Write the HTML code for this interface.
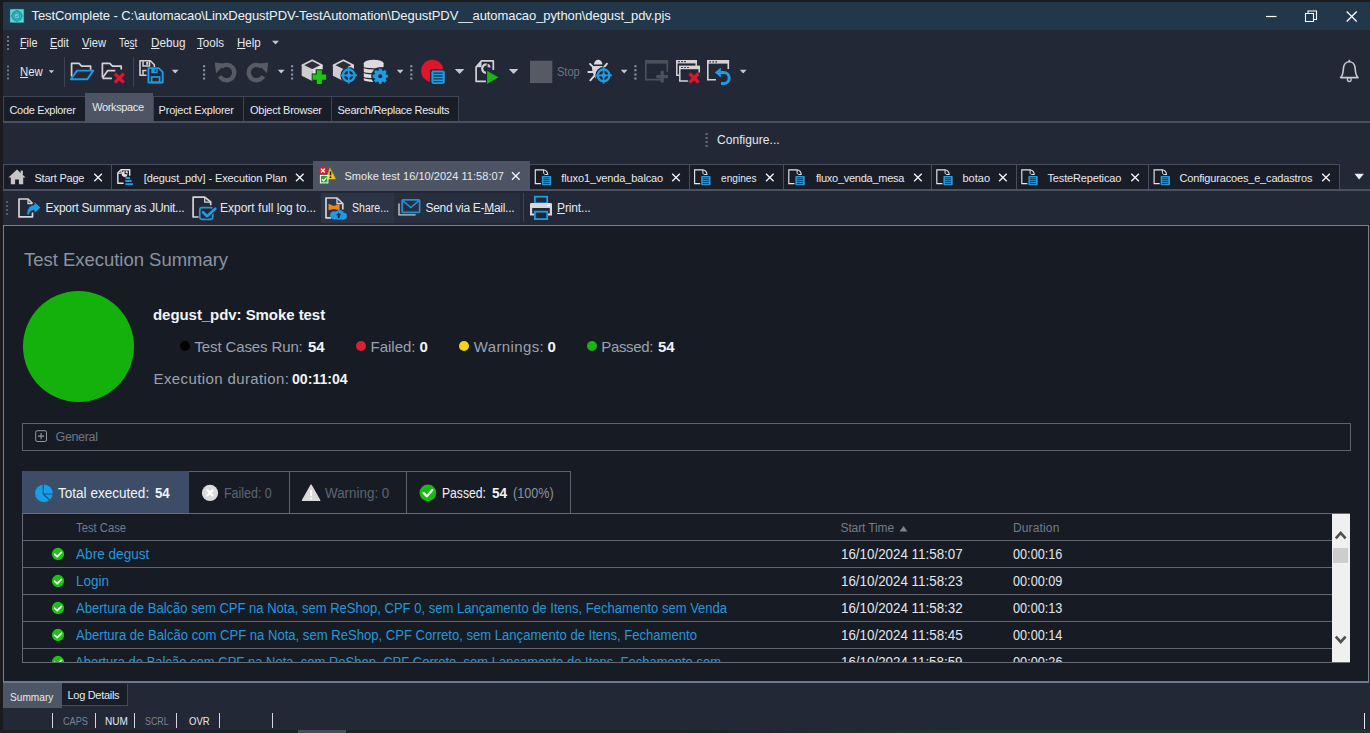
<!DOCTYPE html>
<html>
<head>
<meta charset="utf-8">
<title>TestComplete</title>
<style>
*{box-sizing:border-box;margin:0;padding:0}
html,body{width:1370px;height:733px;overflow:hidden;background:#222836;}
body{font-family:"Liberation Sans",sans-serif;color:#e6e9ee;position:relative;font-size:12px;}
.a{position:absolute;white-space:nowrap;}
.t{position:absolute;white-space:nowrap;line-height:1;}
u{text-decoration:underline;text-underline-offset:1px;text-decoration-thickness:1px}
/* frame */
#topb{left:0;top:0;width:1370px;height:2px;background:#1b1b1d}
#leftb{left:0;top:0;width:3px;height:733px;background:#1b1b1d}
#title{left:3px;top:2px;width:1367px;height:28px;background:#22384a}
#botb{left:0;top:730px;width:1370px;height:3px;background:linear-gradient(90deg,#241e2b 0%,#241e2b 50%,#23342a 70%,#23342a 100%)}
/* tabs */
.ptab{position:absolute;top:96px;height:25px;background:#181d27;border:1px solid #3f4653;border-bottom:none}
.ptab.act{top:93px;height:30px;background:#4d5564;border:none}
.dtab{position:absolute;top:164px;height:25px;background:#181d27;border:1px solid #474e5c;border-bottom:none}
.dtab.act{top:161px;height:30px;background:#4d5564;border:none}
.x{position:absolute;width:9px;height:9px}
.grip{position:absolute;width:2px;}
.grip i{display:block;width:2px;height:2px;background:#5d6574;margin-bottom:2px}
.sep{position:absolute;width:1px;background:#3b4250}
.arr{position:absolute;width:0;height:0;border-left:3.5px solid transparent;border-right:3.5px solid transparent;border-top:4px solid #c9ced6}
/* content */
#content{left:3px;top:225px;width:1366px;height:458px;background:#171c24;border:1px solid #7a818d;border-bottom:2px solid #6a788a}
.dot{position:absolute;width:10px;height:10px;border-radius:50%}
.row{position:absolute;left:23px;width:1309px;height:27px;border-bottom:1px solid #62676f}
.lnk{color:#2397dc;font-size:14px}
.cell{color:#e3e6eb;font-size:14px}
.gray{color:#747b88}
</style>
</head>
<body>
<div class="a" id="title"></div>
<div class="a" id="topb"></div>
<div class="a" id="leftb"></div>

<!-- TITLE -->
<div class="t" id="ttl" style="left:31.50px;top:9.00px;font-size:13px;color:#eef1f4;letter-spacing:-0.081px">TestComplete - C:\automacao\LinxDegustPDV-TestAutomation\DegustPDV__automacao_python\degust_pdv.pjs</div>

<!-- MENU -->
<div class="t" id="m1" style="left:20.00px;top:37.00px;font-size:12px;transform:scaleX(0.9000);transform-origin:left top;letter-spacing:0.000px"><u>F</u>ile</div>
<div class="t" id="m2" style="left:50.00px;top:37.00px;font-size:12px;transform:scaleX(0.9084);transform-origin:left top;letter-spacing:0.000px"><u>E</u>dit</div>
<div class="t" id="m3" style="left:82.00px;top:37.00px;font-size:12px;transform:scaleX(0.9318);transform-origin:left top;letter-spacing:0.000px"><u>V</u>iew</div>
<div class="t" id="m4" style="left:119.00px;top:37.00px;font-size:12px;transform:scaleX(0.8357);transform-origin:left top;letter-spacing:0.000px">Te<u>s</u>t</div>
<div class="t" id="m5" style="left:151.00px;top:37.00px;font-size:12px;transform:scaleX(0.9726);transform-origin:left top;letter-spacing:0.000px"><u>D</u>ebug</div>
<div class="t" id="m6" style="left:197.00px;top:37.00px;font-size:12px;transform:scaleX(0.9668);transform-origin:left top;letter-spacing:0.000px"><u>T</u>ools</div>
<div class="t" id="m7" style="left:237.00px;top:37.00px;font-size:12px;transform:scaleX(0.9600);transform-origin:left top;letter-spacing:0.000px"><u>H</u>elp</div>

<!-- TOOLBAR -->
<div class="t" id="tnew" style="left:20.00px;top:66.00px;font-size:12px;transform:scaleX(0.9459);transform-origin:left top;letter-spacing:0.000px"><u>N</u>ew</div>
<div class="t" id="tstop" style="left:557.00px;top:66.00px;font-size:12px;color:#6d7583;transform:scaleX(0.9200);transform-origin:left top;letter-spacing:0.000px">Stop</div>

<!-- PANEL TABS -->
<div class="a" style="left:3px;top:121px;width:1367px;height:2px;background:#474e5c"></div>
<div class="ptab" style="left:3px;width:83px"></div>
<div class="ptab" style="left:153px;width:91px"></div>
<div class="ptab" style="left:243px;width:89px"></div>
<div class="ptab" style="left:331px;width:128px"></div>
<div class="ptab act" style="left:85px;width:68px"></div>
<div class="t" id="p1" style="left:9.50px;top:104.50px;font-size:11px;letter-spacing:-0.333px">Code Explorer</div>
<div class="t" id="p2" style="left:92.25px;top:101.50px;font-size:11px;letter-spacing:-0.378px">Workspace</div>
<div class="t" id="p3" style="left:158.50px;top:104.50px;font-size:11px;letter-spacing:-0.186px">Project Explorer</div>
<div class="t" id="p4" style="left:250.00px;top:104.50px;font-size:11px;letter-spacing:-0.249px">Object Browser</div>
<div class="t" id="p5" style="left:337.50px;top:104.50px;font-size:11px;letter-spacing:-0.286px">Search/Replace Results</div>

<div class="t" id="cfg" style="left:717.00px;top:134.00px;font-size:12px;letter-spacing:0.057px">Configure...</div>

<!-- DOC TABS -->
<div class="a" style="left:3px;top:189px;width:1367px;height:2px;background:#4a515f"></div>
<div class="dtab" style="left:3px;width:109px"></div>
<div class="dtab" style="left:111px;width:203px"></div>
<div class="dtab" style="left:530px;width:160px;border-left:none"></div>
<div class="dtab" style="left:689px;width:95px"></div>
<div class="dtab" style="left:783px;width:149px"></div>
<div class="dtab" style="left:931px;width:86px"></div>
<div class="dtab" style="left:1016px;width:133px"></div>
<div class="dtab" style="left:1148px;width:192px"></div>
<div class="dtab act" style="left:313px;width:217px"></div>
<div class="t" id="d1" style="left:34.50px;top:172.50px;font-size:11px;letter-spacing:-0.222px">Start Page</div>
<div class="t" id="d2" style="left:143.75px;top:172.50px;font-size:11px;letter-spacing:-0.107px">[degust_pdv] - Execution Plan</div>
<div class="t" id="d3" style="left:344.50px;top:170.50px;font-size:11px;letter-spacing:0.037px">Smoke test 16/10/2024 11:58:07</div>
<div class="t" id="d4" style="left:561.25px;top:172.50px;font-size:11px;letter-spacing:-0.111px">fluxo1_venda_balcao</div>
<div class="t" id="d5" style="left:720.50px;top:172.50px;font-size:11px;transform:scaleX(0.9231);transform-origin:left top;letter-spacing:0.000px">engines</div>
<div class="t" id="d6" style="left:816.00px;top:172.50px;font-size:11px;letter-spacing:-0.267px">fluxo_venda_mesa</div>
<div class="t" id="d7" style="left:962.50px;top:172.50px;font-size:11px;letter-spacing:0.000px">botao</div>
<div class="t" id="d8" style="left:1047.50px;top:172.50px;font-size:11px;letter-spacing:-0.154px">TesteRepeticao</div>
<div class="t" id="d9" style="left:1179.50px;top:172.50px;font-size:11px;letter-spacing:-0.170px">Configuracoes_e_cadastros</div>

<!-- ACTION BAR -->
<div class="a" style="left:321px;top:193px;width:72.500px;height:29.500px;background:#2c3546"></div>
<div class="a" style="left:393.500px;top:193px;width:126.500px;height:29.500px;background:#272e3d"></div>
<div class="t" id="a1" style="left:45.50px;top:202.00px;font-size:12px;letter-spacing:-0.280px">Export Summary as JUnit...</div>
<div class="t" id="a2" style="left:220.00px;top:202.00px;font-size:12px;letter-spacing:0.004px">Export full <u>l</u>og to...</div>
<div class="t" id="a3" style="left:352.00px;top:202.00px;font-size:12px;transform:scaleX(0.8810);transform-origin:left top;letter-spacing:0.000px">Share...</div>
<div class="t" id="a4" style="left:425.50px;top:202.00px;font-size:12px;letter-spacing:-0.297px">Send via E-<u>M</u>ail...</div>
<div class="t" id="a5" style="left:557.00px;top:202.00px;font-size:12px;letter-spacing:-0.143px"><u>P</u>rint...</div>

<!-- CONTENT -->
<div class="a" id="content"></div>
<div class="t" id="c1" style="left:24.00px;top:250.80px;font-size:18.5px;color:#8a92a0;letter-spacing:-0.024px">Test Execution Summary</div>
<div class="a" style="left:23px;top:291px;width:111px;height:111px;border-radius:50%;background:#14b10c"></div>
<div class="t" id="c2" style="left:153.00px;top:307.00px;font-size:15px;font-weight:bold;color:#f2f4f7;letter-spacing:-0.058px">degust_pdv: Smoke test</div>

<div class="dot" style="left:179.500px;top:341px;background:#020202"></div>
<div class="t" id="s1" style="left:194.50px;top:339.00px;font-size:15px;color:#9aa2b0;letter-spacing:-0.126px">Test Cases Run:</div>
<div class="t" id="s1b" style="left:308.00px;top:339.00px;font-size:15px;font-weight:bold;color:#f2f4f7;letter-spacing:-0.200px">54</div>
<div class="dot" style="left:356px;top:341.400px;background:#dc1f35"></div>
<div class="t" id="s2" style="left:370.50px;top:339.00px;font-size:15px;color:#9aa2b0;letter-spacing:0.000px">Failed:</div>
<div class="t" id="s2b" style="left:419.50px;top:339.00px;font-size:15px;font-weight:bold;color:#f2f4f7;letter-spacing:0.000px">0</div>
<div class="dot" style="left:459px;top:341.400px;background:#f4d415"></div>
<div class="t" id="s3" style="left:473.75px;top:339.00px;font-size:15px;color:#9aa2b0;letter-spacing:0.378px">Warnings:</div>
<div class="t" id="s3b" style="left:547.50px;top:339.00px;font-size:15px;font-weight:bold;color:#f2f4f7;letter-spacing:0.000px">0</div>
<div class="dot" style="left:586.900px;top:341.400px;background:#18b40f"></div>
<div class="t" id="s4" style="left:601.25px;top:339.00px;font-size:15px;color:#9aa2b0;letter-spacing:-0.336px">Passed:</div>
<div class="t" id="s4b" style="left:658.00px;top:339.00px;font-size:15px;font-weight:bold;color:#f2f4f7;letter-spacing:0.000px">54</div>

<div class="t" id="e1" style="left:153.50px;top:371.00px;font-size:15px;color:#9aa2b0;letter-spacing:0.388px">Execution duration:</div>
<div class="t" id="e1b" style="left:292.40px;top:371.00px;font-size:15px;font-weight:bold;color:#f2f4f7;transform:scaleX(0.9403);transform-origin:left top;letter-spacing:0.000px">00:11:04</div>

<!-- GENERAL -->
<div class="a" style="left:22px;top:423px;width:1329px;height:28px;border:1px solid #5d636d"></div>
<div class="t" id="g1" style="left:55.50px;top:430.75px;font-size:12.5px;color:#6e7684;letter-spacing:-0.334px">General</div>

<!-- SUMMARY TABS -->
<div class="a" style="left:22px;top:471px;width:549px;height:43px;border:1px solid #5c626c"></div>
<div class="a" style="left:22px;top:471px;width:167px;height:42.500px;background:#3d4d67"></div>
<div class="sep" style="left:289px;top:471px;height:43px;background:#5c626c"></div>
<div class="sep" style="left:406px;top:471px;height:43px;background:#5c626c"></div>
<div class="t" id="k1" style="left:58.00px;top:486.00px;font-size:14px;color:#f2f4f7;transform:scaleX(0.9681);transform-origin:left top;letter-spacing:0.000px">Total executed:</div>
<div class="t" id="k1b" style="left:154.50px;top:486.00px;font-size:14px;font-weight:bold;color:#f2f4f7;transform:scaleX(0.9441);transform-origin:left top;letter-spacing:0.000px">54</div>
<div class="t" id="k2" style="left:224.00px;top:486.00px;font-size:14px;color:#5d6471;transform:scaleX(0.8891);transform-origin:left top;letter-spacing:0.000px">Failed: 0</div>
<div class="t" id="k3" style="left:325.00px;top:486.00px;font-size:14px;color:#5d6471;transform:scaleX(0.9573);transform-origin:left top;letter-spacing:0.000px">Warning: 0</div>
<div class="t" id="k4" style="left:441.75px;top:486.00px;font-size:14px;color:#f2f4f7;transform:scaleX(0.8679);transform-origin:left top;letter-spacing:0.000px">Passed:</div>
<div class="t" id="k4b" style="left:491.50px;top:486.00px;font-size:14px;font-weight:bold;color:#f2f4f7;transform:scaleX(0.9705);transform-origin:left top;letter-spacing:0.000px">54</div>
<div class="t" id="k4c" style="left:513.00px;top:486.00px;font-size:14px;color:#8a92a0;transform:scaleX(0.9002);transform-origin:left top;letter-spacing:0.000px">(100%)</div>

<!-- TABLE -->
<div class="a" style="left:22px;top:513px;width:1327.5px;height:150px;border:1px solid #666b74;overflow:hidden" id="tbl"></div>
<div class="t gray" id="h1" style="left:75.60px;top:522.00px;font-size:12px;transform:scaleX(0.9378);transform-origin:left top;letter-spacing:0.000px">Test Case</div>
<div class="t gray" id="h2" style="left:840.50px;top:522.00px;font-size:12px;letter-spacing:-0.112px">Start Time</div>
<div class="t gray" id="h3" style="left:1013.00px;top:522.00px;font-size:12px;letter-spacing:0.142px">Duration</div>

<div class="row" style="top:514px"></div>
<div class="row" style="top:541px"></div>
<div class="row" style="top:568px"></div>
<div class="row" style="top:595px"></div>
<div class="row" style="top:622px"></div>

<div class="t lnk" id="r1" style="left:75.60px;top:547.00px;font-size:14px;transform:scaleX(0.9717);transform-origin:left top;letter-spacing:0.000px">Abre degust</div>
<div class="t lnk" id="r2" style="left:75.60px;top:574.00px;font-size:14px;transform:scaleX(0.9654);transform-origin:left top;letter-spacing:0.000px">Login</div>
<div class="t lnk" id="r3" style="left:75.60px;top:601.00px;font-size:14px;transform:scaleX(0.9307);transform-origin:left top;letter-spacing:0.000px">Abertura de Balcão sem CPF na Nota, sem ReShop, CPF 0, sem Lançamento de Itens, Fechamento sem Venda</div>
<div class="t lnk" id="r4" style="left:75.60px;top:628.00px;font-size:14px;transform:scaleX(0.9344);transform-origin:left top;letter-spacing:0.000px">Abertura de Balcão com CPF na Nota, sem ReShop, CPF Correto, sem Lançamento de Itens, Fechamento</div>
<div class="a" style="left:23px;top:650px;width:1310px;height:12px;overflow:hidden">
<div class="t lnk" id="r5" style="left:52.00px;top:5.00px;font-size:14px;transform:scaleX(0.9297);transform-origin:left top;letter-spacing:0.000px">Abertura de Balcão com CPF na Nota, com ReShop, CPF Correto, sem Lançamento de Itens, Fechamento sem</div>
<div class="t cell" id="r5d" style="left:818.00px;top:5.00px;font-size:14px;transform:scaleX(0.9539);transform-origin:left top;letter-spacing:0.000px">16/10/2024 11:58:59</div>
<div class="t cell" id="r5t" style="left:990.20px;top:5.00px;font-size:14px;transform:scaleX(0.9074);transform-origin:left top;letter-spacing:0.000px">00:00:26</div>
</div>
<div class="t cell" id="r1d" style="left:841.00px;top:547.00px;font-size:14px;transform:scaleX(0.9547);transform-origin:left top;letter-spacing:0.000px">16/10/2024 11:58:07</div>
<div class="t cell" id="r2d" style="left:841.00px;top:574.00px;font-size:14px;transform:scaleX(0.9547);transform-origin:left top;letter-spacing:0.000px">16/10/2024 11:58:23</div>
<div class="t cell" id="r3d" style="left:841.00px;top:601.00px;font-size:14px;transform:scaleX(0.9547);transform-origin:left top;letter-spacing:0.000px">16/10/2024 11:58:32</div>
<div class="t cell" id="r4d" style="left:841.00px;top:628.00px;font-size:14px;transform:scaleX(0.9547);transform-origin:left top;letter-spacing:0.000px">16/10/2024 11:58:45</div>
<div class="t cell" id="r1t" style="left:1013.40px;top:547.00px;font-size:14px;transform:scaleX(0.9057);transform-origin:left top;letter-spacing:0.000px">00:00:16</div>
<div class="t cell" id="r2t" style="left:1013.40px;top:574.00px;font-size:14px;transform:scaleX(0.9057);transform-origin:left top;letter-spacing:0.000px">00:00:09</div>
<div class="t cell" id="r3t" style="left:1013.40px;top:601.00px;font-size:14px;transform:scaleX(0.9057);transform-origin:left top;letter-spacing:0.000px">00:00:13</div>
<div class="t cell" id="r4t" style="left:1013.40px;top:628.00px;font-size:14px;transform:scaleX(0.9057);transform-origin:left top;letter-spacing:0.000px">00:00:14</div>

<!-- SCROLLBAR -->
<div class="a" style="left:1332px;top:513.6px;width:17.5px;height:148.6px;background:#f0f0f0"></div>
<div class="a" style="left:1333px;top:548px;width:15px;height:15px;background:#cdcdcd"></div>

<!-- BOTTOM TABS -->
<div class="a" style="left:3px;top:683px;width:59px;height:25px;background:#4d5665"></div>
<div class="a" style="left:62px;top:684px;width:66px;height:22px;background:#181d27;border:1px solid #424957;border-top:none;border-left:none"></div>
<div class="t" id="b1" style="left:9.60px;top:691.50px;font-size:11px;transform:scaleX(0.9216);transform-origin:left top;letter-spacing:0.000px">Summary</div>
<div class="t" id="b2" style="left:67.50px;top:689.50px;font-size:11px;letter-spacing:-0.300px">Log Details</div>

<!-- STATUS -->
<div class="sep" style="left:52px;top:713px;height:15px;background:#d4d8de"></div>
<div class="sep" style="left:95px;top:713px;height:15px;background:#d4d8de"></div>
<div class="sep" style="left:134px;top:713px;height:15px;background:#d4d8de"></div>
<div class="sep" style="left:176px;top:713px;height:15px;background:#d4d8de"></div>
<div class="sep" style="left:219px;top:713px;height:15px;background:#d4d8de"></div>
<div class="sep" style="left:272px;top:713px;height:15px;background:#d4d8de"></div>
<div class="t" id="st1" style="left:63.00px;top:715.50px;font-size:11px;color:#7c8492;transform:scaleX(0.8333);transform-origin:left top;letter-spacing:0.000px">CAPS</div>
<div class="t" id="st2" style="left:105.00px;top:715.50px;font-size:11px;transform:scaleX(0.9145);transform-origin:left top;letter-spacing:0.000px">NUM</div>
<div class="t" id="st3" style="left:144.50px;top:715.50px;font-size:11px;color:#7c8492;transform:scaleX(0.8020);transform-origin:left top;letter-spacing:0.000px">SCRL</div>
<div class="t" id="st4" style="left:189.00px;top:715.50px;font-size:11px;transform:scaleX(0.8675);transform-origin:left top;letter-spacing:0.000px">OVR</div>
<div class="sep" style="left:1364px;top:713px;height:16px;background:#e8eaee"></div>

<div class="a" id="botb"></div>
<div class="a" style="left:298px;top:730px;width:48px;height:3px;background:#4d4a5a"></div>
<svg class="a" style="left:0;top:0" width="1370" height="733" viewBox="0 0 1370 733" fill="none" id="ico1">
<!-- app icon -->
<rect x="9.700" y="8.800" width="14.500" height="14.200" fill="#5fd5da" stroke="#123c4a" stroke-width=".900"/>
<g stroke="#1b929a" stroke-width=".950" fill="none">
<rect x="12.800" y="11.800" width="8.300" height="8.300" rx="1.200"/>
<rect x="12.800" y="11.800" width="8.300" height="8.300" rx="1.200" transform="rotate(45 16.950 15.950)"/>
<circle cx="16.950" cy="15.950" r="2.900"/>
<path d="M15.700 16l1 1 1.700-2"/>
</g>
<!-- window controls -->
<path d="M1266 16.5h10.5" stroke="#fff" stroke-width="1.2"/>
<path d="M1305.5 13.5h8v8h-8z M1308 13.3V11h8.5v8.5h-2.8" stroke="#fff" stroke-width="1.1"/>
<path d="M1346.7 11.5l10 10M1356.7 11.5l-10 10" stroke="#fff" stroke-width="1.3"/>
<!-- grips -->
<g fill="#6b7280">
<path d="M7 36h2v2h-2zM7 40h2v2h-2zM7 44h2v2h-2zM7 48h2v2h-2z"/>
<path d="M7 65.5h2v2h-2zM7 69.5h2v2h-2zM7 73.5h2v2h-2zM7 77.5h2v2h-2z"/>
</g>
<g fill="#8c929c">
<path d="M203 65.2h2.2v2h-2.2zM203 69.3h2.2v2h-2.2zM203 73.4h2.2v2h-2.2zM203 77.5h2.2v2h-2.2z"/>
<path d="M291 65.2h2.2v2h-2.2zM291 69.3h2.2v2h-2.2zM291 73.4h2.2v2h-2.2zM291 77.5h2.2v2h-2.2z"/>
<path d="M410.2 65.2h2.2v2h-2.2zM410.2 69.3h2.2v2h-2.2zM410.2 73.4h2.2v2h-2.2zM410.2 77.5h2.2v2h-2.2z"/>
<path d="M634.3 65.2h2.2v2h-2.2zM634.3 69.3h2.2v2h-2.2zM634.3 73.4h2.2v2h-2.2zM634.3 77.5h2.2v2h-2.2z"/>
</g>
<path d="M705.500 133h2.200v2h-2.200zM705.500 137h2.200v2h-2.200zM705.500 141h2.200v2h-2.200zM705.500 145h2.200v2h-2.200z" fill="#626977"/>
<g fill="#596070"><path d="M6.100 201h2v2h-2zM6.100 205h2v2h-2zM6.100 209h2v2h-2zM6.100 213h2v2h-2z"/></g>
<!-- separators -->
<path d="M64.5 57v30M133.5 57v30" stroke="#3d4452" stroke-width="1"/>
<path d="M523.5 193v29" stroke="#3d4452" stroke-width="1"/>
<!-- dropdown arrows -->
<g fill="#c4c9d1">
<path d="M272 40.8h7l-3.5 3.8z"/>
<path d="M48.7 70.3h5.4l-2.7 3z"/>
<path d="M171.8 69.8h6.8l-3.4 3.7z"/>
<path d="M277.8 69.8h6.8l-3.4 3.7z"/>
<path d="M396.8 69.8h6.8l-3.4 3.7z"/>
<path d="M620.8 69.8h6.8l-3.4 3.7z"/>
<path d="M739.8 69.8h6.8l-3.4 3.7z"/>
<path d="M454.8 69h9.6l-4.8 5z"/>
<path d="M508.8 69h9.6l-4.8 5z"/>
</g>
<path d="M1354.5 173.8h9.4l-4.7 5.6z" fill="#eceef1"/>
<!-- open folder -->
<path d="M71.6 76.5V63.3h7.4l2.6 2.8h9v3.6" stroke="#d8d0d2" stroke-width="1.7" stroke-linejoin="round"/>
<path d="M77 70.6h16.3l-6 8.6H70.9z" stroke="#1e9be3" stroke-width="1.9" stroke-linejoin="round"/>
<!-- folder x -->
<path d="M102.4 77.6V63.3h7.4l2.6 2.8h8.8v3.4" stroke="#d8d0d2" stroke-width="1.7" stroke-linejoin="round"/>
<path d="M102.6 77.8l5.2-7.2h7.5M102.4 78.3h9.5" stroke="#d8d0d2" stroke-width="1.7" stroke-linejoin="round"/>
<path d="M114.8 73.6l9 9M123.8 73.6l-9 9" stroke="#222836" stroke-width="5.4"/>
<path d="M114.8 73.6l9 9M123.8 73.6l-9 9" stroke="#e0142c" stroke-width="3.3"/>
<!-- save all -->
<path d="M146.5 75.2H140V60.8h10.3l4 4v2.2" stroke="#d4d0d2" stroke-width="1.6" stroke-linejoin="round"/>
<path d="M143 61v5h6.5v-5M143 75v-4.5h3.5" stroke="#d4d0d2" stroke-width="1.5"/>
<rect x="146.2" y="61.8" width="2" height="3" fill="#d4d0d2"/>
<path d="M148.4 68.1h10.3l4 4v10.4h-14.3z" fill="#222836" stroke="#1e9be3" stroke-width="1.9" stroke-linejoin="round"/>
<rect x="151.4" y="68.4" width="6.3" height="4.8" fill="#1e9be3"/>
<rect x="154.6" y="69.2" width="1.8" height="2.8" fill="#222836"/>
<rect x="151.6" y="77" width="8" height="5.4" stroke="#1e9be3" stroke-width="1.7"/>
<!-- undo / redo -->
<g stroke="#565b64" stroke-width="4.3" fill="none">
<path d="M221.2 67A7.700 7.700 0 1 1 219.800 76.200"/>
<path d="M261.800 67A7.700 7.700 0 1 0 263.200 76.200"/>
</g>
<path d="M214.800 62.600l10.600 1.200-9.400 9.400z" fill="#565b64"/>
<path d="M268.200 62.600l-10.600 1.200 9.400 9.400z" fill="#565b64"/>
<!-- cube plus -->
<g id="cube">
<path d="M312.2 60.3l9.9 4.9-9.9 4.9-9.9-4.9z" fill="#2a2f3a" stroke="#d6d2d6" stroke-width="1.800" stroke-linejoin="round"/>
<path d="M301.7 65.3l10.5 5.2V81l-10.5-5.2z" fill="#cfcbcf"/>
<path d="M322.7 65.3l-10.5 5.2V81l10.5-5.2z" fill="#e2e0e2"/>
</g>
<path d="M319.300 69.300v15.400M311.700 77.100h15.300" stroke="#14301c" stroke-width="7.300"/>
<path d="M319.300 70.200v13.800M312.500 77.100h13.700" stroke="#1dc614" stroke-width="5.100"/>
<!-- cube target -->
<g transform="translate(31.2 0)">
<path d="M312.2 60.3l9.9 4.9-9.9 4.9-9.9-4.9z" fill="#2a2f3a" stroke="#d6d2d6" stroke-width="1.800" stroke-linejoin="round"/>
<path d="M301.7 65.3l10.5 5.2V81l-10.5-5.2z" fill="#cfcbcf"/>
<path d="M322.7 65.3l-10.5 5.2V81l10.5-5.2z" fill="#e2e0e2"/>
</g>
<g id="tgt">
<circle cx="348.700" cy="75.400" r="8.300" fill="#222836"/>
<circle cx="348.700" cy="75.400" r="5.850" stroke="#1e9be3" stroke-width="2.400"/>
<path d="M340.300 75.400h16.800M348.700 67v16.800" stroke="#1e9be3" stroke-width="1.700"/>
<path d="M348.700 72.400l3 3-3 3-3-3z" fill="#1e9be3"/>
</g>
<!-- db gear -->
<path d="M363.800 63.300a9.900 3.500 0 0 1 19.800 0V80.100a9.900 1.800 0 0 1-19.800 0z" fill="#dddbdd"/>
<path d="M363.500 67.100a10.200 1.800 0 0 0 20.400 0M363.500 71.900a10.200 1.800 0 0 0 20.400 0M363.500 76.900a10.200 1.800 0 0 0 20.400 0" stroke="#222836" stroke-width="1.350"/>
<circle cx="380.300" cy="76.200" r="9.100" fill="#222836"/>
<g fill="#1e9be3">
<circle cx="380.300" cy="76.200" r="6.100"/>
<g transform="translate(380.300 76.200)">
<rect x="-1.500" y="-7.600" width="3" height="15.200"/>
<rect x="-1.500" y="-7.600" width="3" height="15.200" transform="rotate(45)"/>
<rect x="-1.500" y="-7.600" width="3" height="15.200" transform="rotate(90)"/>
<rect x="-1.500" y="-7.600" width="3" height="15.200" transform="rotate(135)"/>
</g>
</g>
<circle cx="380.300" cy="76.200" r="2" fill="#1a2a52"/>
<!-- record -->
<circle cx="432.3" cy="70.9" r="11.2" fill="#e0142c"/>
<rect x="430" y="68.9" width="16.5" height="16.5" rx="2.5" fill="#222836"/>
<rect x="431.4" y="70.4" width="13.4" height="13.5" rx="1.8" fill="#1e9be3"/>
<path d="M433.4 73.2h9.2M433.4 76h9.2M433.4 78.8h9.2M433.4 81.6h9.2" stroke="#18324e" stroke-width="1.3"/>
<!-- run -->
<path d="M486 81.300h-9.900V67l5.400-6.100h11.800V70" stroke="#d6d2d6" stroke-width="1.700" stroke-linejoin="round"/>
<path d="M476.300 67.300l5.200-5.900v5.900z" fill="#d6d2d6"/>
<path d="M486.600 64.400a4.300 4.300 0 1 0 3.200 7" stroke="#d6d2d6" stroke-width="2.300"/>
<path d="M487.600 63.700a4 4 0 0 1 3 3.900l-3-.400z" fill="#dcbcdc"/>
<path d="M486.500 69.700l13.100 7.600-13.100 7.600z" fill="#17b80f" stroke="#222836" stroke-width="1.200"/>
<!-- stop -->
<rect x="530" y="60.7" width="22.3" height="22.4" fill="#555a63"/>
<!-- bug + target -->
<g stroke="#dcdade" stroke-width="1.900" stroke-linecap="round">
<path d="M590 63.900l3 3M607 63.700l-3 3.400M588.300 72h5M590.300 80.300l4.200-4.600"/>
</g>
<path d="M594 64.400a4.200 4.600 0 0 1 8.400 0z" fill="#dcdade"/>
<path d="M592 65.900h10.400c.6 4.100-.6 9-3 12.400l-2 1.600c-3.200-2.100-5.600-8-5.400-14z" fill="#d6d4d8"/>
<g transform="translate(254.9 0)">
<circle cx="348.700" cy="75.400" r="8.300" fill="#222836"/>
<circle cx="348.700" cy="75.400" r="5.850" stroke="#1e9be3" stroke-width="2.400"/>
<path d="M340.300 75.400h16.800M348.700 67v16.800" stroke="#1e9be3" stroke-width="1.700"/>
<path d="M348.700 72.400l3 3-3 3-3-3z" fill="#1e9be3"/>
</g>
<!-- window plus (disabled) -->
<path d="M661 79.7h-15.200V60.8h21.500v11" stroke="#4b515b" stroke-width="1.7"/>
<rect x="645" y="60" width="23.100" height="3.600" fill="#4b515b"/>
<path d="M662.200 70.800v11.600M656.400 76.600h11.600" stroke="#4b515b" stroke-width="3.300"/>
<!-- windows x -->
<path d="M679.500 75.200h-2.700V60.800h19.400v5.500" stroke="#d6d2d6" stroke-width="1.500"/>
<rect x="676" y="60" width="21" height="3.400" fill="#d6d2d6"/>
<path d="M678.200 61.700h1.600M681.200 61.700h1.600M684.200 61.700h1.600" stroke="#222836" stroke-width="1.200"/>
<path d="M688.500 81h-8.700V66.600h19.400v6" stroke="#d6d2d6" stroke-width="1.500"/>
<rect x="679" y="65.800" width="21" height="3.400" fill="#d6d2d6"/>
<path d="M681.200 67.500h1.600M684.200 67.500h1.600M687.200 67.500h1.600" stroke="#222836" stroke-width="1.200"/>
<path d="M689.500 73.500l9 9M698.500 73.500l-9 9" stroke="#222836" stroke-width="5.200"/>
<path d="M689.500 73.500l9 9M698.500 73.500l-9 9" stroke="#e0142c" stroke-width="3.200"/>
<!-- window undo -->
<path d="M716 79.700h-8.200V60.800h20.500V69" stroke="#d6d2d6" stroke-width="1.600"/>
<rect x="707" y="60" width="22.100" height="3.600" fill="#d6d2d6"/>
<path d="M709.400 61.800h1.600M712.400 61.800h1.600M715.400 61.800h1.600" stroke="#222836" stroke-width="1.200"/>
<path d="M719.500 72.600h4.300a5.400 5.400 0 0 1 0 10.800h-2.800" stroke="#222836" stroke-width="5.400"/>
<path d="M719.500 72.600h4.300a5.400 5.400 0 0 1 0 10.800h-2.800" stroke="#1e9be3" stroke-width="3"/>
<path d="M714.800 72.600l6-5v10z" fill="#1e9be3"/>
<!-- bell -->
<path d="M1340.600 77.600c2.600-2.400 2.600-6.500 2.900-9.800.4-3.800 3-6 5.800-6s5.400 2.200 5.800 6c.3 3.300.3 7.400 2.900 9.800z" stroke="#c6cad0" stroke-width="1.600" stroke-linejoin="round"/>
<circle cx="1349.300" cy="79.600" r="1.900" stroke="#c6cad0" stroke-width="1.300"/>
<path d="M1349.300 59.800v2" stroke="#c6cad0" stroke-width="1.600"/>
</svg>
<svg class="a" style="left:0;top:0" width="1370" height="733" viewBox="0 0 1370 733" fill="none" id="ico2">
<defs>
<g id="cx"><path d="M-3.800-3.800l7.600 7.600M3.800-3.800l-7.600 7.600" stroke="#f2f3f5" stroke-width="1.350"/></g>
<g id="sdoc">
<path d="M5.600 13.800H0V0h8.300c2.800.6 4 2.300 4.200 5" stroke="#e6e6e6" stroke-width="1.150"/>
<path d="M8.300 0.300v2.600c0 1.300 1 1.800 2 1.800h2" stroke="#ececec" stroke-width="1"/>
<rect x="6.600" y="6.200" width="9.300" height="9.300" rx=".8" fill="#2a9de0"/>
<path d="M8 8.100h6.300M8 10h6.300M8 11.900h6.300M8 13.800h6.300" stroke="#15304c" stroke-width="1"/>
</g>
<g id="rchk"><circle cx="0" cy="0" r="6.150" fill="#1dc212"/><path d="M-3.300 .3l2.500 2.400 4.200-4.300" stroke="#fff" stroke-width="1.800" stroke-linecap="round" stroke-linejoin="round"/></g>
<clipPath id="clip5"><rect x="40" y="649" width="40" height="13"/></clipPath>
</defs>
<!-- home -->
<path d="M17 169.600l8.600 8h-2.400v6.600h-4.300v-4.700h-3.800v4.700h-4.300v-6.600H8.400z" fill="#c6c6c6"/>
<rect x="20.700" y="170.600" width="2.200" height="4" fill="#c6c6c6"/>
<!-- exec plan -->
<path d="M123.600 183.300h-5.800V173l3.300-3.300h8.600v6" stroke="#e4e4e4" stroke-width="1.400" stroke-linejoin="round"/>
<path d="M118 173.200h3.200V170" stroke="#e4e4e4" stroke-width="1.100"/>
<path d="M124.600 171a3 3 0 1 0 3 3.500l-3-.6z" fill="#dedede"/>
<path d="M125.700 170.500a2.900 2.900 0 0 1 2.400 2.900l-2.400-.5z" fill="#e8d0e8"/>
<path d="M125.400 177h4.600v1.900h-4.600zM125.400 180.100h6.200v1.900h-6.200zM125.400 183.200h7.600v1.900h-7.600z" fill="#1ea0e0"/>
<!-- results icon (active tab) -->
<circle cx="322.900" cy="170.600" r="4.300" fill="#e01a2e"/>
<path d="M321 168.700l3.800 3.800M324.800 168.700l-3.800 3.800" stroke="#fff" stroke-width="1.500"/>
<path d="M329.800 167.700l5.900 11.400h-9.400l1.700-5.500z" fill="#f6cb14" stroke="#c89a10" stroke-width=".6" stroke-linejoin="round"/>
<path d="M330.500 171.500v3.800" stroke="#1c1408" stroke-width="1.500"/><circle cx="330.500" cy="177.200" r=".9" fill="#1c1408"/>
<rect x="320.400" y="175.400" width="7.500" height="7.500" fill="#1ea82a" stroke="#fff" stroke-width="1"/>
<path d="M322 179.200l1.600 1.600 2.900-3.200" stroke="#fff" stroke-width="1.300"/>
<!-- script doc icons -->
<g transform="translate(535.300 169.800)">
<path d="M5.600 13.800H0V0h8.300c2.800.6 4 2.300 4.200 5" stroke="#e6e6e6" stroke-width="1.150"/>
<path d="M8.300 0.300v2.600c0 1.300 1 1.800 2 1.800h2" stroke="#ececec" stroke-width="1"/>
<rect x="6.600" y="6.200" width="9.300" height="9.300" rx=".8" fill="#2a9de0"/>
<path d="M8 8.100h6.300M8 10h6.300M8 11.900h6.300M8 13.800h6.300" stroke="#15304c" stroke-width="1"/>
</g>
<g transform="translate(694.600 169.800)">
<path d="M5.600 13.800H0V0h8.300c2.800.6 4 2.300 4.200 5" stroke="#e6e6e6" stroke-width="1.150"/>
<path d="M8.300 0.300v2.600c0 1.300 1 1.800 2 1.800h2" stroke="#ececec" stroke-width="1"/>
<rect x="6.600" y="6.200" width="9.300" height="9.300" rx=".8" fill="#2a9de0"/>
<path d="M8 8.100h6.300M8 10h6.300M8 11.900h6.300M8 13.800h6.300" stroke="#15304c" stroke-width="1"/>
</g>
<g transform="translate(788.800 169.800)">
<path d="M5.600 13.800H0V0h8.300c2.800.6 4 2.300 4.200 5" stroke="#e6e6e6" stroke-width="1.150"/>
<path d="M8.300 0.300v2.600c0 1.300 1 1.800 2 1.800h2" stroke="#ececec" stroke-width="1"/>
<rect x="6.600" y="6.200" width="9.300" height="9.300" rx=".8" fill="#2a9de0"/>
<path d="M8 8.100h6.300M8 10h6.300M8 11.900h6.300M8 13.800h6.300" stroke="#15304c" stroke-width="1"/>
</g>
<g transform="translate(936.800 169.800)">
<path d="M5.600 13.800H0V0h8.300c2.800.6 4 2.300 4.200 5" stroke="#e6e6e6" stroke-width="1.150"/>
<path d="M8.300 0.300v2.600c0 1.300 1 1.800 2 1.800h2" stroke="#ececec" stroke-width="1"/>
<rect x="6.600" y="6.200" width="9.300" height="9.300" rx=".8" fill="#2a9de0"/>
<path d="M8 8.100h6.300M8 10h6.300M8 11.900h6.300M8 13.800h6.300" stroke="#15304c" stroke-width="1"/>
</g>
<g transform="translate(1021.800 169.800)">
<path d="M5.600 13.800H0V0h8.300c2.800.6 4 2.300 4.200 5" stroke="#e6e6e6" stroke-width="1.150"/>
<path d="M8.300 0.300v2.600c0 1.300 1 1.800 2 1.800h2" stroke="#ececec" stroke-width="1"/>
<rect x="6.600" y="6.200" width="9.300" height="9.300" rx=".8" fill="#2a9de0"/>
<path d="M8 8.100h6.300M8 10h6.300M8 11.900h6.300M8 13.800h6.300" stroke="#15304c" stroke-width="1"/>
</g>
<g transform="translate(1154.100 169.800)">
<path d="M5.600 13.800H0V0h8.300c2.800.6 4 2.300 4.200 5" stroke="#e6e6e6" stroke-width="1.150"/>
<path d="M8.300 0.300v2.600c0 1.300 1 1.800 2 1.800h2" stroke="#ececec" stroke-width="1"/>
<rect x="6.600" y="6.200" width="9.300" height="9.300" rx=".8" fill="#2a9de0"/>
<path d="M8 8.100h6.300M8 10h6.300M8 11.900h6.300M8 13.800h6.300" stroke="#15304c" stroke-width="1"/>
</g>
<!-- close x -->
<g transform="translate(98.100 177.500)"><path d="M-3.800-3.800l7.600 7.600M3.800-3.800l-7.600 7.600" stroke="#f2f3f5" stroke-width="1.350"/></g>
<g transform="translate(299.800 177.500)"><path d="M-3.800-3.800l7.600 7.600M3.800-3.800l-7.600 7.600" stroke="#f2f3f5" stroke-width="1.350"/></g>
<g transform="translate(515.800 176)"><path d="M-3.800-3.800l7.600 7.600M3.800-3.800l-7.600 7.600" stroke="#f2f3f5" stroke-width="1.350"/></g>
<g transform="translate(676 177.500)"><path d="M-3.800-3.800l7.600 7.600M3.800-3.800l-7.600 7.600" stroke="#f2f3f5" stroke-width="1.350"/></g>
<g transform="translate(769.800 177.500)"><path d="M-3.800-3.800l7.600 7.600M3.800-3.800l-7.600 7.600" stroke="#f2f3f5" stroke-width="1.350"/></g>
<g transform="translate(917.900 177.500)"><path d="M-3.800-3.800l7.600 7.600M3.800-3.800l-7.600 7.600" stroke="#f2f3f5" stroke-width="1.350"/></g>
<g transform="translate(1002.900 177.500)"><path d="M-3.800-3.800l7.600 7.600M3.800-3.800l-7.600 7.600" stroke="#f2f3f5" stroke-width="1.350"/></g>
<g transform="translate(1135.100 177.500)"><path d="M-3.800-3.800l7.600 7.600M3.800-3.800l-7.600 7.600" stroke="#f2f3f5" stroke-width="1.350"/></g>
<g transform="translate(1326 177.500)"><path d="M-3.800-3.800l7.600 7.600M3.800-3.800l-7.600 7.600" stroke="#f2f3f5" stroke-width="1.350"/></g>
<!-- export summary -->
<path d="M32.500 212.500v4.400H19V199h9l4.500 4.500" stroke="#d8d2d4" stroke-width="1.700" stroke-linejoin="round"/>
<path d="M28 199.200v4.300h4.300" stroke="#d8d2d4" stroke-width="1.300"/>
<path d="M26.800 214.900c0-6.400 3-9.900 7.400-10.100v-3.400l6.600 6.200-6.600 6.200v-3.400c-3 0-4.700 1.300-4.900 4.500z" fill="#1e9be3" stroke="#222836" stroke-width=".8"/>
<!-- export log -->
<path d="M198.600 217h-5.500v-19.800h11.600l6 4.800v3.200" stroke="#d8d2d4" stroke-width="1.700" stroke-linejoin="round"/>
<path d="M204.700 197.400v4.700h5.800" stroke="#d8d2d4" stroke-width="1.300"/>
<rect x="199.800" y="207.600" width="13" height="11.700" rx="2.200" stroke="#2299d8" stroke-width="1.700"/>
<path d="M203 212.200l4 4 8.300-7.500" stroke="#222836" stroke-width="4.600" stroke-linecap="round"/>
<path d="M203 212.200l4 4 8.300-7.500" stroke="#1e9be3" stroke-width="2.700" stroke-linecap="round" stroke-linejoin="round"/>
<!-- share -->
<path d="M331 217.800h-5V198h11l5.800 5.500v6" stroke="#d8d2d4" stroke-width="1.700" stroke-linejoin="round"/>
<path d="M337 198.200v5.300h5.600" stroke="#d8d2d4" stroke-width="1.300"/>
<path d="M328.500 203.800l5.500 2.300 5.600-2.300v6.500l-5.600-1.300-5.500 1.300z" fill="#f08322"/>
<g fill="#1e9be3"><circle cx="334.200" cy="215.300" r="4.100"/><circle cx="339.600" cy="214.400" r="4.400"/><circle cx="343.600" cy="216.100" r="3.400"/><rect x="334" y="215" width="10" height="4.500"/></g>
<path d="M338.700 212.500l2.700 2.800h-1.700v2.600h-2v-2.600H336z" fill="#17304a"/>
<!-- mail -->
<path d="M399 203.600v11.300h16.600" stroke="#c8c8cc" stroke-width="1.400"/>
<rect x="402.100" y="199.800" width="17.500" height="12.600" rx="1" stroke="#2191d4" stroke-width="1.700"/>
<path d="M402.400 200.300l8.450 7.200 8.450-7.200" stroke="#2191d4" stroke-width="1.600"/>
<!-- printer -->
<rect x="534.900" y="196.700" width="12.300" height="6.600" stroke="#1e9be3" stroke-width="1.800"/>
<path d="M531.200 202.900h19.600q1.200 0 1.200 1.200v11.500h-4.200v-2.200h2v-5.500h-17.600v5.500h2v2.200H530v-11.500q0-1.200 1.200-1.200z" fill="#d9d7db"/>
<rect x="547" y="204.800" width="3" height="1.200" fill="#fff"/>
<rect x="534.900" y="211.700" width="12.300" height="7.400" fill="#1c2536" stroke="#1e9be3" stroke-width="1.800"/>
<!-- general expand -->
<rect x="35.700" y="430.700" width="10.800" height="10.800" rx="1.500" stroke="#9198a4" stroke-width="1"/>
<path d="M38 436.100h6.200M41.100 433v6.200" stroke="#9198a4" stroke-width="1.100"/>
<!-- pie -->
<circle cx="43.900" cy="493.300" r="8.900" fill="#14a0e8"/>
<path d="M43.200 484.500v9.500h9.600M43.200 494l6.400 6" stroke="#2b4c78" stroke-width="1.200"/>
<!-- failed -->
<circle cx="210" cy="492.900" r="8.100" fill="#dadada"/>
<path d="M206.900 489.800l6.200 6.200M213.100 489.800l-6.200 6.200" stroke="#fff" stroke-width="2.100"/>
<!-- warning -->
<path d="M311.100 485.200l8.600 15.200h-17.200z" fill="#dadada" stroke="#dadada" stroke-width="1.400" stroke-linejoin="round"/>
<path d="M311.100 490v6" stroke="#fff" stroke-width="1.900"/><circle cx="311.100" cy="498.400" r="1" fill="#fff"/>
<!-- passed -->
<circle cx="427.900" cy="492.900" r="8.400" fill="#1cb814"/>
<path d="M423.600 493.100l3.200 3.200 5.600-6.300" stroke="#fff" stroke-width="2.300" stroke-linecap="round" stroke-linejoin="round"/>
<!-- row checks -->
<g transform="translate(58 554)"><circle cx="0" cy="0" r="6.150" fill="#1dc212"/><path d="M-3.300 .3l2.500 2.400 4.200-4.300" stroke="#fff" stroke-width="1.800" stroke-linecap="round" stroke-linejoin="round"/></g>
<g transform="translate(58 581)"><circle cx="0" cy="0" r="6.150" fill="#1dc212"/><path d="M-3.300 .3l2.500 2.400 4.200-4.300" stroke="#fff" stroke-width="1.800" stroke-linecap="round" stroke-linejoin="round"/></g>
<g transform="translate(58 608)"><circle cx="0" cy="0" r="6.150" fill="#1dc212"/><path d="M-3.300 .3l2.500 2.400 4.200-4.300" stroke="#fff" stroke-width="1.800" stroke-linecap="round" stroke-linejoin="round"/></g>
<g transform="translate(58 635)"><circle cx="0" cy="0" r="6.150" fill="#1dc212"/><path d="M-3.300 .3l2.500 2.400 4.200-4.300" stroke="#fff" stroke-width="1.800" stroke-linecap="round" stroke-linejoin="round"/></g>
<g clip-path="url(#clip5)"><g transform="translate(58 662)"><circle cx="0" cy="0" r="6.150" fill="#1dc212"/><path d="M-3.300 .3l2.500 2.400 4.200-4.300" stroke="#fff" stroke-width="1.800" stroke-linecap="round" stroke-linejoin="round"/></g></g>
<!-- scrollbar chevrons -->
<path d="M1335.800 538.300l4.900-5.400 4.900 5.400" stroke="#505050" stroke-width="2.700"/>
<path d="M1335.800 636.600l4.900 5.400 4.900-5.400" stroke="#505050" stroke-width="2.700"/>
<!-- sort arrow -->
<path d="M899.600 531.600h7.800l-3.900-5.700z" fill="#7d8593"/>
</svg>
</body>
</html>
